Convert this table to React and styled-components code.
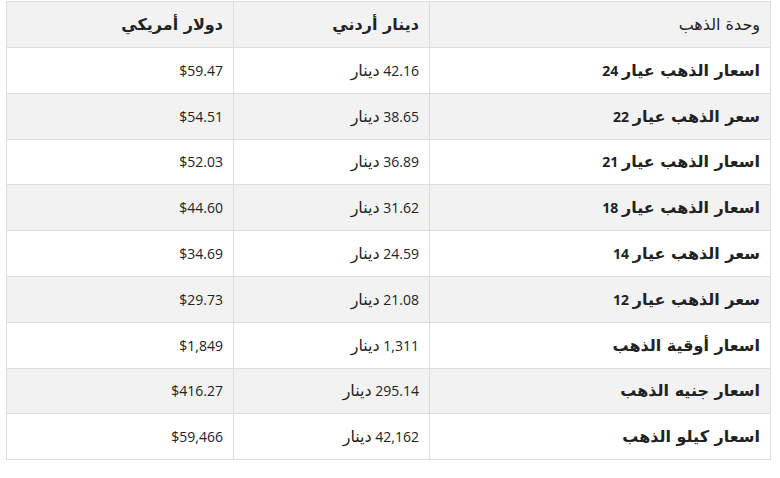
import React from 'react'
import styled, { createGlobalStyle } from 'styled-components'

const GlobalStyle = createGlobalStyle`
  body {
    margin: 0;
    background: #fff;
    font-family: "Open Sans", "DejaVu Sans", sans-serif;
    color: #222;
  }
`

const Wrap = styled.div`
  padding: 1px 10px 0 6px;
`

const Table = styled.table`
  direction: rtl;
  width: 764px;
  border-collapse: collapse;
  table-layout: fixed;
  font-size: 14px;
`

const Row = styled.tr`
  height: ${p => (p.$head ? 46 : 45.8)}px;
  background: ${p => (p.$shaded ? '#f2f2f2' : '#fff')};
`

const HeadCell = styled.th`
  box-sizing: border-box;
  width: ${p => p.$w}px;
  padding: 0 10px;
  text-align: right;
  font-weight: ${p => (p.$light ? 400 : 700)};
  border: 1px solid #ddd;
`

const Cell = styled.td`
  box-sizing: border-box;
  padding: 0 10px;
  text-align: right;
  font-weight: ${p => (p.$bold ? 700 : 400)};
  border: 1px solid #ddd;
  white-space: nowrap;
`

const Ar = styled.span`
  font-family: "DejaVu Sans", sans-serif;
  font-size: 16px;
`

const Num = styled.span`
  font-family: "Open Sans", sans-serif;
  font-size: 14px;
`

const rows = [
  ['اسعار الذهب عيار', '24', '42.16', '$59.47'],
  ['سعر الذهب عيار', '22', '38.65', '$54.51'],
  ['اسعار الذهب عيار', '21', '36.89', '$52.03'],
  ['اسعار الذهب عيار', '18', '31.62', '$44.60'],
  ['سعر الذهب عيار', '14', '24.59', '$34.69'],
  ['سعر الذهب عيار', '12', '21.08', '$29.73'],
  ['اسعار أوقية الذهب', '', '1,311', '$1,849'],
  ['اسعار جنيه الذهب', '', '295.14', '$416.27'],
  ['اسعار كيلو الذهب', '', '42,162', '$59,466']
]

export default function App () {
  return (
    <>
      <GlobalStyle />
      <Wrap>
        <Table>
          <thead>
            <Row $head $shaded>
              <HeadCell $w={341} $light><Ar>وحدة الذهب</Ar></HeadCell>
              <HeadCell $w={196}><Ar>دينار أردني</Ar></HeadCell>
              <HeadCell $w={227}><Ar>دولار أمريكي</Ar></HeadCell>
            </Row>
          </thead>
          <tbody>
            {rows.map((r, i) => (
              <Row key={i} $shaded={i % 2 === 1}>
                <Cell $bold>
                  <Ar>{r[0]}</Ar>
                  {r[1] && <> <Num>{r[1]}</Num></>}
                </Cell>
                <Cell><Num>{r[2]}</Num> <Ar>دينار</Ar></Cell>
                <Cell dir='ltr' style={{ textAlign: 'right' }}><Num>{r[3]}</Num></Cell>
              </Row>
            ))}
          </tbody>
        </Table>
      </Wrap>
    </>
  )
}
